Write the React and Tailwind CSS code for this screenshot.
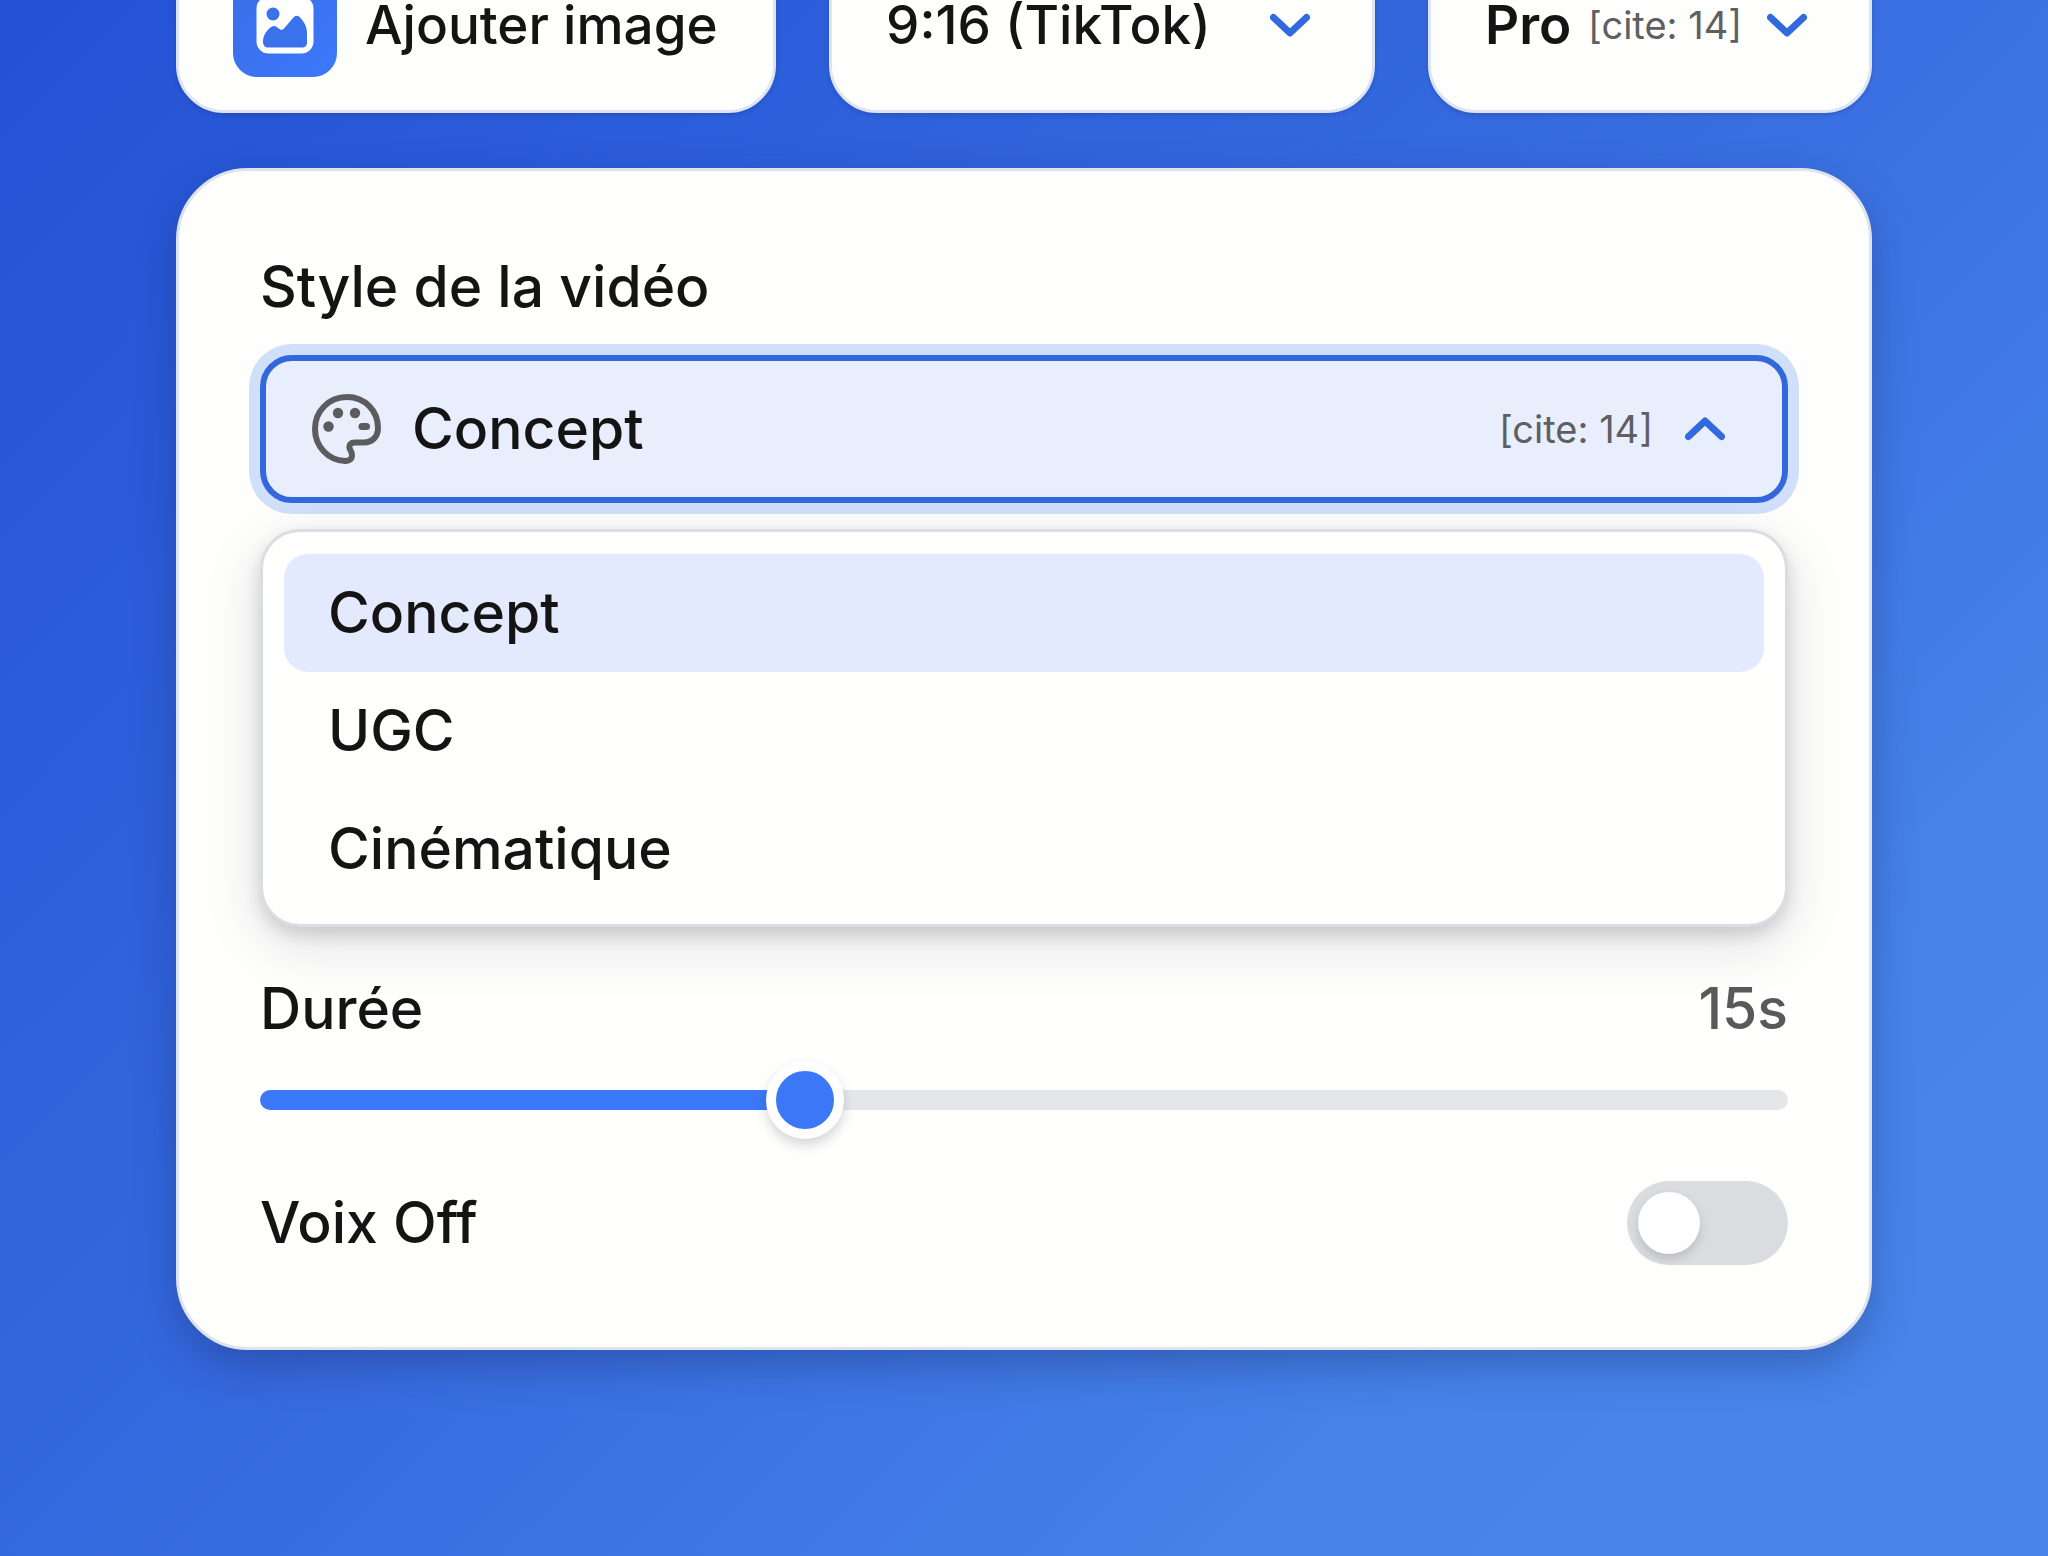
import { useState } from "react";

const STYLES = ["Concept", "UGC", "Cinématique"];
const MAX_DURATION = 43;

function Chevron({ up = false }) {
  return (
    <svg
      viewBox="0 0 40 24"
      className={up ? "h-6 w-10 shrink-0 rotate-180" : "h-6 w-10 shrink-0"}
      fill="none"
      stroke="#3269dd"
      strokeWidth="7"
      strokeLinecap="round"
      strokeLinejoin="round"
      aria-hidden="true"
    >
      <path d="M3.500 4.500 20 20 36.500 4.500" />
    </svg>
  );
}

function ImageIcon() {
  return (
    <svg viewBox="0 0 58 58" className="size-[58px]" aria-hidden="true">
      <rect x="0.5" y="0.5" width="57" height="57" rx="12" fill="#fefefe" />
      <circle cx="17" cy="18" r="6.5" fill="#3a72ec" />
      <path
        d="M7 45c0-6 5-12.500 9-14.500 3-1.500 5 .5 7.500 2.500 1.500 1.200 3 1.200 4.500-.5l9-10.500c2.500-3 5-3 7.500 0 3.500 4 6.500 8.500 6.500 15v9c0 4-2 5.500-5 5.500H12c-3.500 0-5-2.500-5-6.500z"
        fill="#3a72ec"
      />
    </svg>
  );
}

function PaletteIcon() {
  return (
    <svg viewBox="0 0 70 70" className="size-[70px] shrink-0" fill="none" aria-hidden="true">
      <path
        d="M33 67C16 66 3 52.500 3 35 3 17 17 3 35 3c17.500 0 31 13.500 31 31 0 8.500-5.500 14.500-14 14.500h-9c-4.500 0-6 2-5.500 5.500.3 2 2.500 3.500 2.500 7 0 4-2.500 6.200-7 6z"
        stroke="#5c5c5e"
        strokeWidth="6"
        strokeLinejoin="round"
      />
      <g fill="#5c5c5e">
        <circle cx="16.500" cy="32.500" r="5.200" />
        <circle cx="26" cy="19" r="5.200" />
        <circle cx="43" cy="19" r="5.200" />
        <rect x="46.500" y="29" width="11.500" height="7" rx="3.500" />
      </g>
    </svg>
  );
}

function Cite() {
  return <span className="whitespace-nowrap text-[38px] font-normal leading-[48px] text-[#5f5f62]">[cite: 14]</span>;
}

const topCard =
  "flex h-44 items-center rounded-[48px] border-3 border-[#dfe5f0] bg-[#fefefd] pl-[54px] shadow-[0_2px_4px_rgba(20,40,120,0.25)]";

export default function App() {
  const [style, setStyle] = useState("Concept");
  const [open, setOpen] = useState(true);
  const [duration, setDuration] = useState(15);
  const [voice, setVoice] = useState(false);

  return (
    <main className="min-h-screen overflow-hidden bg-linear-[135deg,#2451d4_0%,#2d5fdb_25%,#3569de_45%,#3e76e4_62%,#4684ea_80%,#4886ec_100%] px-44 pb-[205px] font-[Inter,sans-serif] text-[57px] font-[450] leading-[72px] text-[#141414]">
      <div className="-mt-[63px] grid grid-cols-[600fr_546fr_444fr] gap-[53px] text-[53px] leading-[48px]">
        <button type="button" className={topCard}>
          <span className="mr-7 flex size-[104px] items-center justify-center rounded-3xl bg-linear-to-br from-[#3b6ce8] to-[#3b79fa]">
            <ImageIcon />
          </span>
          <span className="whitespace-nowrap">Ajouter image</span>
        </button>

        <label className={`${topCard} justify-between pr-[62px]`}>
          <select aria-label="Format" className="h-16 appearance-none bg-transparent outline-none">
            <option>9:16 (TikTok)</option>
          </select>
          <Chevron />
        </label>

        <label className={`${topCard} justify-between pr-[62px]`}>
          <span className="flex items-center gap-4">
            <select aria-label="Formule" className="h-16 appearance-none bg-transparent font-semibold outline-none">
              <option>Pro</option>
            </select>
            <Cite />
          </span>
          <Chevron />
        </label>
      </div>

      <section className="mt-[55px] rounded-[72px] border-3 border-[#dfe3ec] bg-[#fefefd] px-[81px] pb-[82px] pt-20 shadow-[0_16px_40px_rgba(25,40,100,0.35)]">
        <h2 id="style-label">Style de la vidéo</h2>

        <button
          type="button"
          aria-haspopup="listbox"
          aria-expanded={open}
          aria-labelledby="style-label style-value"
          onClick={() => setOpen(!open)}
          className="mt-8 flex h-[148px] w-full items-center rounded-[32px] border-6 border-[#3268dc] bg-[#e9eefc] pl-[46px] pr-[57px] ring-11 ring-[#d0e0fa]"
        >
          <PaletteIcon />
          <span id="style-value" className="ml-[30px] mr-auto">{style}</span>
          <Cite />
          <span className="ml-8 flex">
            <Chevron up={open} />
          </span>
        </button>

        {open && (
          <ul
            role="listbox"
            aria-labelledby="style-label"
            className="mt-[26px] rounded-[40px] border-3 border-[#dcdde2] bg-[#fefefd] px-[21px] pb-4 pt-[22px] shadow-[0_8px_16px_rgba(20,25,40,0.15),0_16px_56px_rgba(20,25,40,0.13)]"
          >
            {STYLES.map((name) => (
              <li
                key={name}
                role="option"
                aria-selected={name === style}
                onClick={() => setStyle(name)}
                className="flex h-[118px] items-center rounded-3xl px-11 aria-selected:bg-[#e4eafd]"
              >
                {name}
              </li>
            ))}
          </ul>
        )}

        <div className="mt-[46px] flex justify-between">
          <label htmlFor="duration">Durée</label>
          <output htmlFor="duration" className="text-[#59595c]">{duration}s</output>
        </div>
        <input
          id="duration"
          type="range"
          min="0"
          max={MAX_DURATION}
          value={duration}
          onChange={(e) => setDuration(Number(e.target.value))}
          style={{ "--fill": `${(duration / MAX_DURATION) * 100}%` }}
          className="mt-4 block h-[78px] w-full appearance-none bg-transparent outline-none [&::-webkit-slider-runnable-track]:h-5 [&::-webkit-slider-runnable-track]:rounded-full [&::-webkit-slider-runnable-track]:bg-[linear-gradient(to_right,#3b78f8_var(--fill),#e5e6ea_var(--fill))] [&::-webkit-slider-thumb]:-mt-[29px] [&::-webkit-slider-thumb]:size-[78px] [&::-webkit-slider-thumb]:appearance-none [&::-webkit-slider-thumb]:rounded-full [&::-webkit-slider-thumb]:border-10 [&::-webkit-slider-thumb]:border-solid [&::-webkit-slider-thumb]:border-[#fefefe] [&::-webkit-slider-thumb]:bg-[#3b78f8] [&::-webkit-slider-thumb]:shadow-[0_6px_12px_rgba(20,25,40,0.18)]"
        />

        <div className="mt-[42px] flex items-center justify-between">
          <label htmlFor="voice">Voix Off</label>
          <input
            id="voice"
            type="checkbox"
            role="switch"
            checked={voice}
            onChange={(e) => setVoice(e.target.checked)}
            className="flex h-[84px] w-[161px] appearance-none items-center rounded-full bg-[#dbdce0] px-[11px] before:size-[62px] before:rounded-full before:bg-[#fefefe] before:shadow-[0_5px_10px_rgba(60,65,60,0.2)] checked:justify-end checked:bg-[#3b78f8]"
          />
        </div>
      </section>
    </main>
  );
}
